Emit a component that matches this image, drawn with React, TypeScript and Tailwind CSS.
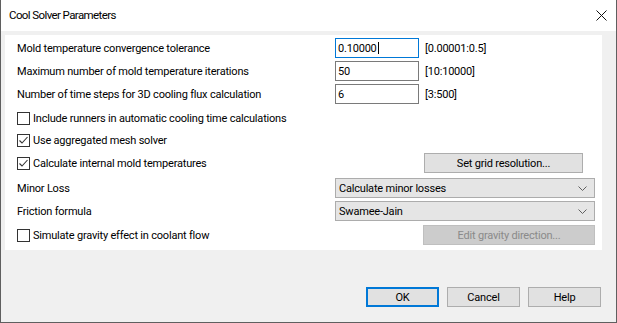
import React from "react";

const Check = ({ checked }: { checked: boolean }) => (
  <div className="w-[13px] h-[13px] border border-[#333333] bg-white flex items-center justify-center shrink-0">
    {checked && (
      <svg width="11" height="11" viewBox="0 0 11 11">
        <polyline points="1.5,5.5 4,8 9.5,2" fill="none" stroke="#333333" strokeWidth="1.1" />
      </svg>
    )}
  </div>
);

const Chevron = () => (
  <svg width="9" height="5" viewBox="0 0 9 5">
    <polyline points="0.5,0.5 4.5,4.5 8.5,0.5" fill="none" stroke="#606060" strokeWidth="1" />
  </svg>
);

const Field = ({ value, focused, range }: { value: string; focused?: boolean; range: string }) => (
  <div className="flex items-center">
    <div
      className={`w-[84px] h-[20px] bg-white border flex items-center pl-[2px] ${
        focused ? "border-[#0078d7]" : "border-[#7a7a7a]"
      }`}
    >
      <span>{value}</span>
      {focused && <span className="w-px h-[12px] bg-black ml-[1px]" />}
    </div>
    <span className="ml-[6px]">{range}</span>
  </div>
);

const Row = ({ left, right, mt }: { left: React.ReactNode; right?: React.ReactNode; mt: string }) => (
  <div className={`h-[20px] flex items-center ${mt}`}>
    <div className="w-[318px] flex items-center">{left}</div>
    <div className="flex items-center">{right}</div>
  </div>
);

const CheckLabel = ({ checked, text }: { checked: boolean; text: string }) => (
  <div className="flex items-center">
    <Check checked={checked} />
    <span className="ml-[3px] whitespace-nowrap">{text}</span>
  </div>
);

const Dropdown = ({ text }: { text: string }) => (
  <div className="w-[260px] h-[20px] bg-[#e5e5e5] border border-[#acacac] flex items-center pl-[3px] pr-[7px] justify-between">
    <span>{text}</span>
    <Chevron />
  </div>
);

export default function App() {
  return (
    <div className="w-[617px] h-[323px] bg-[#f0f0f0] border-l border-r border-b border-[#5f5f5f] flex flex-col font-[family-name:Roboto,sans-serif] text-[11px] tracking-[-0.2px] text-black leading-none">
      <div className="h-[31px] bg-white flex items-center justify-between pl-[8px] pr-[9px] shrink-0">
        <span className="text-[11.5px] tracking-[-0.6px]">Cool Solver Parameters</span>
        <svg width="11" height="11" viewBox="0 0 11 11">
          <line x1="0.5" y1="0.5" x2="10.5" y2="10.5" stroke="#111" strokeWidth="1" />
          <line x1="10.5" y1="0.5" x2="0.5" y2="10.5" stroke="#111" strokeWidth="1" />
        </svg>
      </div>
      <div className="bg-white mt-[4px] ml-[4px] mr-[14px] h-[215px] pt-[3px] pl-[12px] flex flex-col shrink-0">
        <Row mt="" left={<span>Mold temperature convergence tolerance</span>} right={<Field value="0.10000" focused range="[0.00001:0.5]" />} />
        <Row mt="mt-[3px]" left={<span>Maximum number of mold temperature iterations</span>} right={<Field value="50" range="[10:10000]" />} />
        <Row mt="mt-[3px]" left={<span>Number of time steps for 3D cooling flux calculation</span>} right={<Field value="6" range="[3:500]" />} />
        <Row mt="mt-[4px]" left={<CheckLabel checked={false} text="Include runners in automatic cooling time calculations" />} />
        <Row mt="mt-[2px]" left={<CheckLabel checked text="Use aggregated mesh solver" />} />
        <Row
          mt="mt-[3px]"
          left={<CheckLabel checked text="Calculate internal mold temperatures" />}
          right={
            <div className="ml-[89px] w-[159px] h-[20px] bg-[#e1e1e1] border border-[#adadad] flex items-center justify-center">
              Set grid resolution...
            </div>
          }
        />
        <Row mt="mt-[5px]" left={<span>Minor Loss</span>} right={<Dropdown text="Calculate minor losses" />} />
        <Row mt="mt-[3px]" left={<span>Friction formula</span>} right={<Dropdown text="Swamee-Jain" />} />
        <Row
          mt="mt-[4px]"
          left={<CheckLabel checked={false} text="Simulate gravity effect in coolant flow" />}
          right={
            <div className="ml-[88px] w-[172px] h-[20px] bg-[#cccccc] border border-[#bfbfbf] flex items-center justify-center text-[#8a8a8a]">
              Edit gravity direction...
            </div>
          }
        />
      </div>
      <div className="mt-[37px] flex justify-end gap-[8px] pr-[15px]">
        <div className="w-[73px] h-[20px] bg-[#e1e1e1] border-2 border-[#0078d7] flex items-center justify-center">OK</div>
        <div className="w-[73px] h-[20px] bg-[#e1e1e1] border border-[#adadad] flex items-center justify-center">Cancel</div>
        <div className="w-[73px] h-[20px] bg-[#e1e1e1] border border-[#adadad] flex items-center justify-center">Help</div>
      </div>
    </div>
  );
}
